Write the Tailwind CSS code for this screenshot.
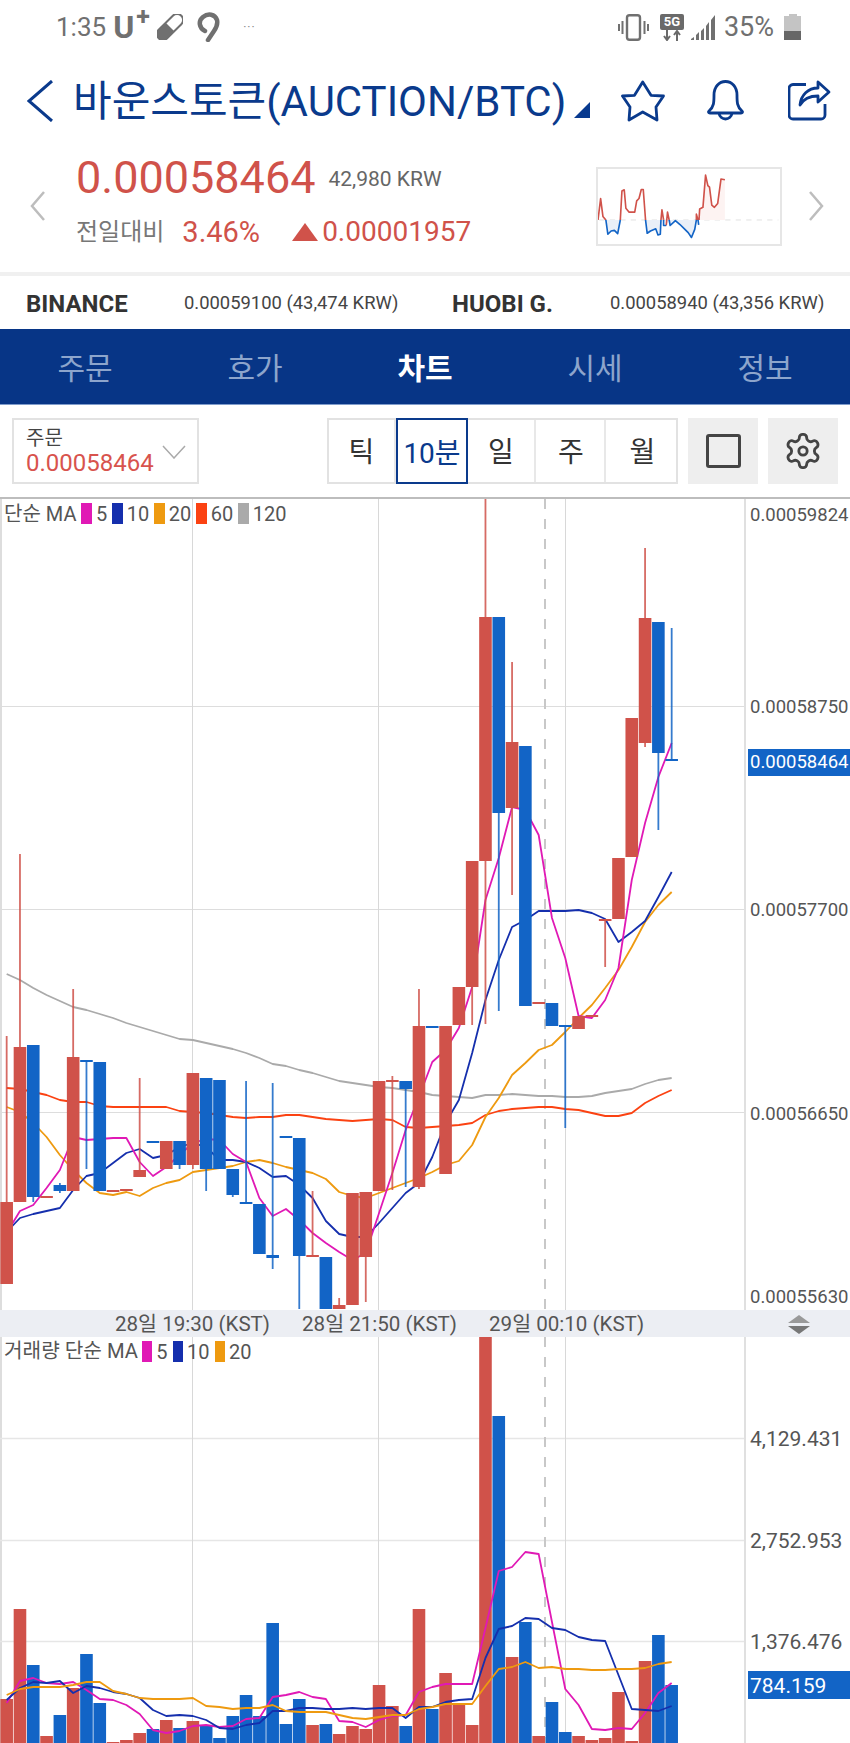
<!DOCTYPE html>
<html lang="ko">
<head>
    <meta charset="UTF-8">
    <meta name="viewport" content="width=device-width, initial-scale=1.0">
    <title>바운스토큰 차트</title>
    <script src="https://cdn.jsdelivr.net/npm/@tailwindcss/browser@4"></script>
</head>
<body class="w-[850px] h-[1743px] overflow-hidden bg-white font-['Roboto','Noto_Sans_CJK_KR',sans-serif]">
    <!-- Status bar -->
    <div class="h-[54px] flex items-center pl-[56px] pr-[49px] text-[#707070]">
        <span class="text-[26px] leading-none">1:35</span>
        <span class="ml-[7px] text-[32px] leading-none font-bold relative">U<span class="absolute left-[23px] top-[-7px] text-[25px]">+</span></span>
        <svg class="ml-[23px] w-[26px] h-[26px]" viewBox="0 0 26 26">
            <g transform="rotate(-45 13 13)">
                <rect x="-3" y="7" width="32" height="12" rx="6" fill="none" stroke="#707070" stroke-width="2"/>
                <path d="M13 7H3a6 6 0 0 0 0 12h10z" fill="#707070"/>
            </g>
        </svg>
        <svg class="ml-[13px] w-[24px] h-[30px]" viewBox="0 0 24 30" fill="none" stroke="#707070" stroke-width="4.5" stroke-linecap="round">
            <path d="M9 19C3 16 2 9 7 5c5-4 12-3 14 3 1 4-1 8-3 11l-6 9"/>
        </svg>
        <span class="ml-[23px] text-[12px] leading-none tracking-[1px] text-[#888]">···</span>
        <div class="ml-auto flex items-center">
            <svg class="w-[31px] h-[27px]" viewBox="0 0 31 27" fill="none" stroke="#707070">
                <rect x="9" y="1.2" width="13" height="24.6" rx="2.5" stroke-width="2.4"/>
                <path d="M4.5 7v13M1 10v7M26.5 7v13M30 10v7" stroke-width="2"/>
            </svg>
            <div class="ml-[11px] w-[24px] flex flex-col items-center">
                <span class="w-[24px] h-[16px] bg-[#6a6a6a] rounded-[2px] text-white text-[13px] font-bold leading-[16px] text-center">5G</span>
                <svg class="w-[18px] h-[11px]" viewBox="0 0 18 11" fill="none" stroke="#6a6a6a" stroke-width="2">
                    <path d="M4 0v9M1 6l3 4 3-4M14 11V2M11 5l3-4 3 4"/>
                </svg>
            </div>
            <svg class="ml-[7px] w-[26px] h-[26px]" viewBox="0 0 26 26" fill="#707070">
                <path d="M0 26h3v-3L0 25zM5 26h3v-8l-3 3zM10 26h3V14l-3 3zM15 26h3V8l-3 4zM20 26h4V1l-4 5z"/>
            </svg>
            <span class="ml-[7px] text-[27px] leading-none">35%</span>
            <div class="ml-[10px] w-[17px] h-[26px] flex flex-col items-center">
                <div class="w-[8px] h-[2px] bg-[#c4c4c4]"></div>
                <div class="w-[17px] h-[15px] bg-[#c4c4c4]"></div>
                <div class="w-[17px] h-[9px] bg-[#666]"></div>
            </div>
        </div>
    </div>

    <!-- Title -->
    <div class="h-[94px] flex items-center pl-[27px] text-[#0a3a8c]">
        <svg class="w-[26px] h-[42px]" viewBox="0 0 26 42" fill="none" stroke="#0a3a8c" stroke-width="3">
            <path d="M25 1 2 21l23 20"/>
        </svg>
        <span class="ml-[20px] mt-[2px] w-[491px] text-[42px] leading-none whitespace-nowrap">바운스토큰(AUCTION/BTC)</span>
        <svg class="ml-[10px] mt-[17px] w-[16px] h-[16px]" viewBox="0 0 16 16" fill="#083a8f"><path d="M16 0v16H0z"/></svg>
        <svg class="ml-[31px] w-[44px] h-[42px]" viewBox="0 0 44 42" fill="none" stroke="#0a3a8c" stroke-width="2.8" stroke-linejoin="round">
            <path d="M21.7 2 30 15.3 42.5 16 35 27l1 13-14.3-8L8 40l1-13-7.5-11 12-.7z"/>
        </svg>
        <svg class="ml-[41px] w-[40px] h-[42px]" viewBox="0 0 40 42" fill="none" stroke="#0a3a8c" stroke-width="2.8" stroke-linejoin="round">
            <path d="M3 31c5-4 5-9 5-16 0-8 5-13.500 11.500-13.500S31 7 31 15c0 7 0 12 5 16 1 1 .5 2-1 2H4c-1.500 0-2-1-1-2z"/>
            <path d="M13 33c1 8 12 8 13 0"/>
        </svg>
        <svg class="ml-[42px] w-[44px] h-[42px]" viewBox="0 0 44 42" fill="none" stroke="#0a3a8c" stroke-width="2.800" stroke-linejoin="round">
            <path d="M18 4.500H5a4 4 0 0 0-4 4V35a4 4 0 0 0 4 4h28a4 4 0 0 0 4-4V24"/>
            <path d="m30 2 11 10-11 10v-6c-8 0-14 2-18 9 1-10 8-17 18-17z"/>
        </svg>
    </div>

    <!-- Price summary -->
    <div class="h-[124px] flex items-center pl-[30px] pr-[26px] pb-[8px]">
        <svg class="w-[15px] h-[30px]" viewBox="0 0 15 30" fill="none" stroke="#bdbdbd" stroke-width="2.500"><path d="M14 1 2 15l12 14"/></svg>
        <div class="ml-[31px] mb-[11px] flex-1">
            <div class="flex items-center">
                <span class="text-[45px] leading-[50px] text-[#d0524a]">0.00058464</span>
                <span class="ml-[13px] mt-[3px] text-[21px] text-[#666]">42,980 KRW</span>
            </div>
            <div class="mt-[13px] flex items-center">
                <span class="text-[24px] leading-[32px] text-[#777]">전일대비</span>
                <span class="ml-[18px] text-[29px] leading-[32px] text-[#d0524a]">3.46%</span>
                <svg class="ml-[32px] w-[26px] h-[18px]" viewBox="0 0 26 18" fill="#d0524a"><path d="M13 0l13 18H0z"/></svg>
                <span class="ml-[4px] text-[28px] leading-[32px] text-[#d0524a]">0.00001957</span>
            </div>
        </div>
        <div class="w-[186px] h-[79px] border-2 border-[#e6e6e6]">
            <svg class="w-full h-full" viewBox="80 294 555 231" preserveAspectRatio="none" fill="none" stroke-width="5" stroke-linejoin="round">
                <path d="M84 451H630" stroke="#e0e0e0" stroke-width="3" stroke-dasharray="16 16"/>
                <path d="M105 451 110 495 120 485 130 483 140 493 148 451zM225 451 230 492 240 485 256 478 263 497 270 495 272 451zM286 451 288 468 297 451 300 468 316 453 330 465 345 480 355 490 365 505 375 480 380 451z" fill="#e9eff8" stroke="none"/>
                <path d="M390 451 390 417 400 412 408 313 415 345 420 350 427 405 435 412 445 400 455 325 467 327V451z" fill="#fdf3f2" stroke="none"/>
                <path d="M80 451 88 385 95 440 104 451M148 451 153 362 160 358 165 415 175 427 192 427 198 392 205 385 212 357 218 357 225 451M272 451 275 420 280 451M288 468 292 427 297 451M380 451 380 433 385 451M388 451 390 417 400 412 408 313 415 345 420 350 427 405 435 412 445 400 455 325 467 327" stroke="#d0524a"/>
                <path d="M104 451 110 495 120 485 130 483 140 493 148 451M225 451 230 492 240 485 256 478 263 497 270 495 272 451M280 451 280 468 288 468M297 451 300 468 316 453 330 465 345 480 355 490 365 505 375 480 380 451M385 451 387 466" stroke="#1264c6"/>
            </svg>
        </div>
        <svg class="ml-[27px] w-[15px] h-[30px]" viewBox="0 0 15 30" fill="none" stroke="#bdbdbd" stroke-width="2.500"><path d="m1 1 12 14L1 29"/></svg>
    </div>

    <!-- Exchange prices -->
    <div class="h-[57px] pt-[2px] border-t-4 border-[#f0f0f0] flex items-center pl-[26px] text-[#444] whitespace-nowrap">
        <span class="w-[158px] text-[24px] font-bold leading-none text-[#333]">BINANCE</span>
        <span class="w-[268px] text-[18.4px] leading-none">0.00059100 (43,474 KRW)</span>
        <span class="w-[158px] text-[24px] font-bold leading-none text-[#333]">HUOBI G.</span>
        <span class="text-[18.4px] leading-none">0.00058940 (43,356 KRW)</span>
    </div>

    <!-- Tabs -->
    <div class="h-[76px] pt-[4px] grid grid-cols-5 items-center bg-[#073586] border-b border-[#7f9ccb] text-[30px] text-center text-[#8da5cc]">
        <span>주문</span>
        <span>호가</span>
        <span class="font-bold text-white">차트</span>
        <span>시세</span>
        <span>정보</span>
    </div>

    <!-- Chart toolbar -->
    <div class="h-[92px] flex items-start pt-[13px] pl-[12px]">
        <div class="relative w-[187px] h-[66px] border-2 border-[#e2e2e2] pl-[12px] pt-[7px]">
            <div class="text-[20px] leading-[22px] text-[#444]">주문</div>
            <div class="text-[24px] leading-[28px] text-[#d8534d]">0.00058464</div>
            <svg class="absolute right-[11px] top-[25px] w-[24px] h-[14px]" viewBox="0 0 24 14" fill="none" stroke="#aaa" stroke-width="1.500"><path d="m1 1 11 12L23 1"/></svg>
        </div>
        <div class="ml-[128px] w-[351px] h-[66px] flex border-2 border-[#e2e2e2] text-[28px] text-[#333] text-center">
            <span class="w-[67px] leading-[66px] border-r-2 border-[#e8e8e8]">틱</span>
            <span class="w-[72px] h-[66px] -mt-[2px] leading-[68px] border-2 border-[#0a3a8c] text-[#0a3a8c] whitespace-nowrap">10분</span>
            <span class="w-[68px] leading-[66px] border-r-2 border-[#e8e8e8]">일</span>
            <span class="w-[70px] pl-[2px] leading-[66px] border-r-2 border-[#e8e8e8]">주</span>
            <span class="flex-1 pl-[3px] leading-[66px]">월</span>
        </div>
        <div class="ml-[10px] w-[70px] h-[66px] bg-[#eeeeee] flex items-center justify-center">
            <div class="w-[35px] h-[34px] border-[3px] border-[#444] rounded-[3px]"></div>
        </div>
        <div class="ml-[10px] w-[70px] h-[66px] bg-[#eeeeee] flex items-center justify-center">
            <svg class="w-[40px] h-[40px]" viewBox="0 0 24 24" fill="none" stroke="#444" stroke-width="1.700" stroke-linejoin="round">
                <path d="M12.220 2h-.44a2 2 0 0 0-2 2v.18a2 2 0 0 1-1 1.730l-.43.25a2 2 0 0 1-2 0l-.15-.08a2 2 0 0 0-2.730.73l-.22.38a2 2 0 0 0 .73 2.730l.15.1a2 2 0 0 1 1 1.720v.51a2 2 0 0 1-1 1.740l-.15.09a2 2 0 0 0-.73 2.730l.22.38a2 2 0 0 0 2.730.73l.15-.08a2 2 0 0 1 2 0l.43.25a2 2 0 0 1 1 1.730V20a2 2 0 0 0 2 2h.44a2 2 0 0 0 2-2v-.18a2 2 0 0 1 1-1.730l.43-.25a2 2 0 0 1 2 0l.15.08a2 2 0 0 0 2.730-.73l.22-.39a2 2 0 0 0-.73-2.730l-.15-.08a2 2 0 0 1-1-1.740v-.5a2 2 0 0 1 1-1.740l.15-.09a2 2 0 0 0 .73-2.730l-.22-.38a2 2 0 0 0-2.730-.73l-.15.08a2 2 0 0 1-2 0l-.43-.25a2 2 0 0 1-1-1.730V4a2 2 0 0 0-2-2z"/>
                <circle cx="12" cy="12" r="2.500"/>
            </svg>
        </div>
    </div>

    <!-- Price pane -->
    <div class="relative h-[813px] border-t-2 border-[#bdbdbd] text-[#555]">
        <svg id="priceChart" class="absolute left-0 top-0 w-[850px] h-[811px]" viewBox="0 499 850 811"></svg>
        <div class="absolute left-[4px] top-[4px] flex items-center h-[21px] text-[20px] leading-none whitespace-nowrap">
            <span>단순 MA</span>
            <i class="ml-[5px] w-[10.500px] h-[21px] bg-[#e019b5]"></i><span class="ml-[4px]">5</span>
            <i class="ml-[5px] w-[10.500px] h-[21px] bg-[#152fad]"></i><span class="ml-[4px]">10</span>
            <i class="ml-[5px] w-[10.500px] h-[21px] bg-[#ee9a10]"></i><span class="ml-[4px]">20</span>
            <i class="ml-[5px] w-[10.500px] h-[21px] bg-[#fb4212]"></i><span class="ml-[4px]">60</span>
            <i class="ml-[5px] w-[10.500px] h-[21px] bg-[#aaaaaa]"></i><span class="ml-[4px]">120</span>
        </div>
        <span class="absolute left-[750px] top-[5px] text-[18.500px] leading-[22px]">0.00059824</span>
        <span class="absolute left-[750px] top-[197px] text-[18.500px] leading-[22px]">0.00058750</span>
        <span class="absolute left-[748px] top-[250px] w-[102px] h-[27px] pl-[2px] bg-[#1264c6] text-white text-[18.500px] leading-[27px]">0.00058464</span>
        <span class="absolute left-[750px] top-[400px] text-[18.500px] leading-[22px]">0.00057700</span>
        <span class="absolute left-[750px] top-[604px] text-[18.500px] leading-[22px]">0.00056650</span>
        <span class="absolute left-[750px] top-[787px] text-[18.500px] leading-[22px]">0.00055630</span>
    </div>

    <!-- Time axis -->
    <div class="h-[27px] pt-[1px] flex items-center gap-[32px] pl-[115px] pr-[40px] bg-[#eceef3] text-[20.570px] leading-none text-[#555] whitespace-nowrap">
        <span>28일 19:30 (KST)</span>
        <span>28일 21:50 (KST)</span>
        <span>29일 00:10 (KST)</span>
        <svg class="ml-auto w-[22px] h-[19px]" viewBox="0 0 22 19">
            <path d="M11 0l11 8H0z" fill="#999"/>
            <path d="M11 19 0 11h22z" fill="#777"/>
        </svg>
    </div>

    <!-- Volume pane -->
    <div class="relative h-[406px] text-[#555]">
        <svg id="volumeChart" class="absolute left-0 top-0 w-[850px] h-[406px]" viewBox="0 1337 850 406"></svg>
        <div class="absolute left-[4px] top-[4px] flex items-center h-[21px] text-[20px] leading-none whitespace-nowrap">
            <span class="text-[20.200px]">거래량 단순 MA</span>
            <i class="ml-[4px] w-[10.500px] h-[21px] bg-[#e019b5]"></i><span class="ml-[4px]">5</span>
            <i class="ml-[5px] w-[10.500px] h-[21px] bg-[#152fad]"></i><span class="ml-[4px]">10</span>
            <i class="ml-[5px] w-[10.500px] h-[21px] bg-[#ee9a10]"></i><span class="ml-[4px]">20</span>
        </div>
        <span class="absolute left-[750px] top-[90px] text-[21px] leading-[24px]">4,129.431</span>
        <span class="absolute left-[750px] top-[192px] text-[21px] leading-[24px]">2,752.953</span>
        <span class="absolute left-[750px] top-[293px] text-[21px] leading-[24px]">1,376.476</span>
        <span class="absolute left-[748px] top-[334px] w-[102px] h-[28px] pl-[2px] bg-[#1264c6] text-white text-[21px] leading-[30px]">784.159</span>
    </div>

    <script>
        var RED = '#d0524a', BLUE = '#1264c6';
        function x(i) { return 6.67 + 13.3 * i; }

        // color, body top, body bottom, wick top, wick bottom
        var candles = [
            ['r',1202,1284,1036,1284],['r',1047,1202,854,1202],['b',1045,1197,1045,1202],['r',1196,1198,0,0],
            ['b',1185,1191,1183,1193],['r',1057,1191,989,1191],['b',1060,1062,1060,1169],['b',1062,1191,0,0],
            ['r',1190,1192,0,0],['r',1189,1191,0,0],['r',1170,1177,1078,1170],['b',1141,1143,0,0],
            ['r',1141,1169,0,0],['b',1141,1165,1141,1169],['r',1073,1165,1073,1169],['b',1078,1169,1078,1191],
            ['b',1080,1169,0,0],['b',1169,1195,1169,1197],['b',1202,1204,1081,1204],['b',1204,1254,0,0],
            ['b',1255,1258,1083,1269],['b',1136,1138,0,0],['b',1138,1256,1138,1309],['r',1255,1257,1191,1256],
            ['b',1257,1309,0,0],['r',1305,1309,1298,1305],['r',1193,1305,0,0],['r',1192,1257,1192,1302],
            ['r',1081,1191,0,0],['r',1080,1082,1076,1190],['b',1081,1089,1081,1187],['r',1026,1187,989,1189],
            ['b',1026,1028,0,0],['r',1026,1174,0,0],['r',987,1025,0,0],['r',861,987,861,1025],
            ['r',617,861,499,1024],['b',617,813,617,1011],['r',742,808,662,895],['b',746,1006,0,0],
            ['r',1002,1004,0,0],['b',1003,1026,0,0],['b',1025,1027,1026,1128],['r',1016,1029,0,0],
            ['r',1015,1017,0,0],['r',919,921,920,967],['r',858,919,0,0],['r',718,857,0,0],
            ['r',618,743,548,747],['b',622,753,622,830],['b',759,761,628,761]
        ];

        var priceMA = [
            ['#aaaaaa',[974,980,988,995,1001,1007,1010,1014,1018,1023,1027,1031,1035,1039,1040,1043,1046,1049,1053,1058,1064,1066,1070,1073,1077,1081,1083,1085,1087,1088,1090,1092,1095,1096,1097,1098,1095,1095,1094,1095,1096,1096,1097,1097,1096,1093,1091,1089,1084,1080,1078]],
            ['#fb4212',[1088,1089,1092,1095,1100,1102,1102,1106,1107,1107,1107,1107,1107,1111,1112,1113,1115,1117,1118,1117,1117,1115,1115,1117,1119,1120,1121,1120,1119,1120,1127,1128,1127,1126,1125,1123,1115,1111,1109,1108,1107,1107,1109,1110,1113,1116,1116,1113,1103,1096,1090]],
            ['#ee9a10',[1107,1112,1123,1137,1155,1170,1183,1193,1195,1192,1196,1188,1183,1180,1172,1170,1168,1166,1162,1160,1163,1167,1170,1173,1179,1192,1196,1198,1193,1188,1183,1178,1172,1165,1161,1145,1117,1098,1075,1063,1050,1045,1032,1018,1005,988,970,947,922,905,892]],
            ['#152fad',[1232,1218,1214,1211,1208,1190,1176,1173,1163,1153,1149,1158,1155,1147,1143,1147,1160,1160,1162,1168,1177,1176,1185,1198,1221,1234,1237,1237,1223,1208,1193,1183,1157,1123,1100,1053,1000,960,927,920,911,911,911,910,913,919,942,932,921,897,872]],
            ['#e019b5',[1233,1211,1205,1188,1170,1137,1140,1139,1138,1138,1162,1176,1167,1155,1143,1139,1140,1154,1162,1198,1216,1209,1220,1233,1243,1252,1260,1253,1213,1173,1130,1097,1062,1050,1028,987,900,858,807,810,835,918,958,1016,1018,1000,968,880,823,777,743]]
        ];

        var volumes = [
            ['r',1699],['r',1609],['b',1665],['r',1736],['b',1715],['r',1688],['b',1654],['b',1703],['r',1742],['r',1740],
            ['r',1733],['b',1729],['r',1720],['b',1728],['r',1721],['b',1726],['b',1738],['b',1716],['b',1695],['b',1716],
            ['b',1623],['b',1724],['b',1699],['r',1725],['b',1724],['r',1734],['r',1726],['r',1729],['r',1685],['r',1706],
            ['b',1726],['r',1609],['b',1709],['r',1673],['r',1705],['r',1725],['r',1337],['b',1416],['r',1657],['b',1622],
            ['r',1736],['b',1702],['b',1732],['r',1736],['r',1740],['r',1738],['r',1692],['r',1741],['r',1661],['b',1635],['b',1685]
        ];

        var volumeMA = [
            ['#e019b5',[1703,1681,1678,1683,1684,1682,1690,1699,1700,1705,1714,1730,1733,1731,1726,1725,1727,1726,1719,1718,1697,1695,1692,1697,1699,1721,1722,1727,1720,1716,1715,1692,1687,1684,1684,1684,1628,1571,1567,1552,1554,1622,1689,1705,1729,1730,1728,1729,1713,1693,1683]],
            ['#152fad',[1700,1688,1682,1683,1681,1693,1686,1688,1692,1694,1698,1710,1716,1715,1716,1720,1728,1729,1725,1723,1711,1711,1708,1708,1709,1709,1708,1709,1708,1708,1718,1707,1707,1702,1700,1699,1658,1629,1626,1618,1619,1628,1630,1637,1640,1641,1675,1709,1710,1711,1706]],
            ['#ee9a10',[1695,1689,1687,1687,1687,1685,1682,1682,1691,1694,1698,1699,1699,1699,1698,1706,1707,1709,1708,1708,1705,1711,1712,1712,1712,1715,1718,1719,1717,1715,1715,1709,1707,1704,1704,1704,1686,1669,1667,1662,1668,1667,1669,1669,1670,1670,1669,1669,1668,1664,1662]]
        ];

        function line(x1, y1, x2, y2, color, w, extra) {
            return '<line x1="' + x1 + '" y1="' + y1 + '" x2="' + x2 + '" y2="' + y2 + '" stroke="' + color + '" stroke-width="' + w + '"' + (extra || '') + '/>';
        }
        function polyline(ma) {
            var pts = ma[1].map(function (y, i) { return x(i) + ',' + y; }).join(' ');
            return '<polyline fill="none" stroke-linejoin="round" stroke="' + ma[0] + '" stroke-width="1.800" points="' + pts + '"/>';
        }
        function grid(top, bottom, rows, rowColor, rowWidth) {
            var s = line(1, top, 1, bottom, '#dddddd', 2);
            rows.forEach(function (y) { s += line(0, y, 745, y, rowColor, rowWidth); });
            [192.5, 378.5, 565.5].forEach(function (v) { s += line(v, top, v, bottom, '#d8d8d8', 1); });
            s += line(545, top, 545, bottom, '#c8c8c8', 2, ' stroke-dasharray="10 10"');
            s += line(745, top, 745, bottom, '#e0e0e0', 2);
            return s;
        }

        var price = grid(499, 1310, [706.5, 909.5, 1112.5], '#dddddd', 1);
        price += priceMA.map(polyline).join('');
        candles.forEach(function (c, i) {
            var color = c[0] == 'r' ? RED : BLUE;
            if (c[3]) price += line(x(i), c[3], x(i), c[4], color, 1.800, ' opacity="0.85"');
            price += '<rect x="' + (x(i) - 6.3) + '" y="' + c[1] + '" width="12.6" height="' + (c[2] - c[1]) + '" fill="' + color + '"/>';
        });
        document.getElementById('priceChart').innerHTML = price;

        var volume = grid(1337, 1743, [1438.5, 1540.5, 1641.5], '#e6e6e6', 1.500);
        volumes.forEach(function (v, i) {
            volume += '<rect x="' + (x(i) - 6.3) + '" y="' + v[1] + '" width="12.6" height="' + (1743 - v[1]) + '" fill="' + (v[0] == 'r' ? RED : BLUE) + '"/>';
        });
        volume += volumeMA.map(polyline).join('');
        document.getElementById('volumeChart').innerHTML = volume;
    </script>
</body>
</html>
